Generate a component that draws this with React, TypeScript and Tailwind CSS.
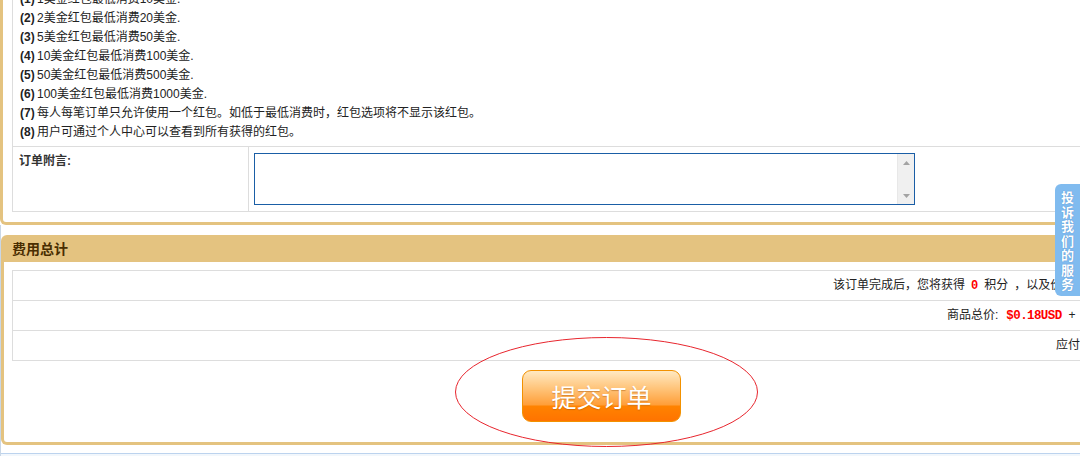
import React from "react";

const lines: [string, string][] = [
  ["(1)", "1美金红包最低消费10美金."],
  ["(2)", "2美金红包最低消费20美金."],
  ["(3)", "5美金红包最低消费50美金."],
  ["(4)", "10美金红包最低消费100美金."],
  ["(5)", "50美金红包最低消费500美金."],
  ["(6)", "100美金红包最低消费1000美金."],
  ["(7)", "每人每笔订单只允许使用一个红包。如低于最低消费时，红包选项将不显示该红包。"],
  ["(8)", "用户可通过个人中心可以查看到所有获得的红包。"],
];

export default function App() {
  return (
    <div className="relative w-[1080px] h-[456px] overflow-hidden bg-white text-[12px] text-[#222] font-['Liberation_Sans','Noto_Sans_CJK_SC',sans-serif]">
      <div className="w-[1203px]">
        {/* Panel 1 */}
        <div className="-mt-[11px] border-l-[3px] border-r-[3px] border-b-[3px] border-[#e4c380] rounded-bl-[6px] rounded-br-[6px] pl-[9px] pr-[9px] pb-[10px]">
          <div className="border border-[#dddddd]">
            <div className="border-b border-[#dddddd] pl-[7px] pb-[4px] leading-[19px]">
              {lines.map(([n, t]) => (
                <div key={n} className="whitespace-nowrap">
                  <span className="inline-block w-[17px] font-bold">{n}</span>
                  {t}
                </div>
              ))}
            </div>
            <div className="flex">
              <div className="w-[236px] border-r border-[#dddddd] pl-[6px] pt-[5px] leading-[18px] font-bold text-[#333]">
                订单附言:
              </div>
              <div className="pl-[5px] py-[6px]">
                <div className="flex w-[661px] h-[52px] border border-[#1a5ea6] bg-white">
                  <textarea className="flex-1 resize-none outline-none overflow-hidden bg-white" />
                  <div className="w-[17px] bg-[#f0f0f0] border-l border-[#e8e8e8] flex flex-col items-center justify-between pt-[7px] pb-[6px]">
                    <svg width="7" height="4" viewBox="0 0 7 4">
                      <path d="M3.5 0 L7 4 L0 4 Z" fill="#a3a3a3" />
                    </svg>
                    <svg width="7" height="4" viewBox="0 0 7 4">
                      <path d="M0 0 L7 0 L3.5 4 Z" fill="#a3a3a3" />
                    </svg>
                  </div>
                </div>
              </div>
            </div>
          </div>
        </div>

        {/* Lower area with light blue left edge */}
        <div className="pl-[1px] bg-[#c9d7e6]">
          <div className="bg-white">
            <div className="h-[10px]" />
            {/* Panel 2 */}
            <div>
              <div className="h-[27px] rounded-tl-[6px] rounded-tr-[6px] bg-[#e4c380] pl-[11px] leading-[27px] text-[14px] font-bold text-[#4a2e00] font-['Noto_Sans_CJK_SC',sans-serif]">
                费用总计
              </div>
              <div className="border-l-[3px] border-r-[3px] border-b-[3px] border-[#e4c380] rounded-bl-[6px] rounded-br-[6px] pl-[8px] pr-[9px] pt-[8px]">
                <div className="border border-[#dddddd]">
                  <div className="h-[30px] leading-[29px] whitespace-nowrap pl-[820px] border-b border-[#dddddd]">
                    该订单完成后，您将获得
                    <span className="ml-[6px] font-bold text-[#ff0000] font-['Liberation_Mono',monospace]">0</span>
                    <span className="ml-[6px]">积分</span>
                    <span className="ml-[6px]">，以及价值 $0.00USD的红包。</span>
                  </div>
                  <div className="h-[30px] leading-[29px] whitespace-nowrap pl-[934px] border-b border-[#dddddd]">
                    商品总价:
                    <span className="ml-[8px] text-[12.5px] tracking-[-0.6px] font-bold text-[#ff0000] font-['Liberation_Mono',monospace]">$0.18USD</span>
                    <span className="ml-[7px]">+</span>
                    <span className="ml-[10px]">配送费用: $0.00USD</span>
                  </div>
                  <div className="h-[29px] leading-[29px] whitespace-nowrap pl-[1043px]">
                    应付款金额: $0.18USD
                  </div>
                </div>
                <div className="flex justify-center pt-[9px] pb-[20px]">
                  <button className="w-[159px] h-[52px] rounded-[9px] border border-[#f29100] bg-[linear-gradient(to_bottom,#ffe9c2_0%,#ffc47a_35%,#ff9e38_68%,#ff8300_70%,#ff7300_100%)] text-white text-[25px] leading-[50px] font-['Noto_Sans_CJK_SC',sans-serif] [text-shadow:0_1px_1px_rgba(160,80,0,0.45)]">
                    提交订单
                  </button>
                </div>
              </div>
            </div>
            <div className="h-[8px]" />
            <div className="h-[1px] bg-[#bcd3ee]" />
            <div className="h-[20px] bg-[#f2f7fc]" />
          </div>
        </div>
      </div>

      {/* red annotation ellipse */}
      <svg className="absolute left-[454px] top-[336px]" width="305" height="112" viewBox="0 0 305 112">
        <ellipse cx="152.5" cy="56" rx="151" ry="54.5" fill="none" stroke="#e8262e" strokeWidth="1" />
      </svg>

      {/* floating complaint tab */}
      <div className="absolute right-0 top-[184px] w-[25px] h-[112px] rounded-l-[6px] bg-[#80bbef] flex flex-col items-center pt-[6px] text-white text-[13px] font-bold leading-[14.5px] font-['Noto_Sans_CJK_SC',sans-serif] [text-shadow:0_0_1px_#3f7fc0]">
        {"投诉我们的服务".split("").map((c, i) => (
          <span key={i}>{c}</span>
        ))}
      </div>
    </div>
  );
}
